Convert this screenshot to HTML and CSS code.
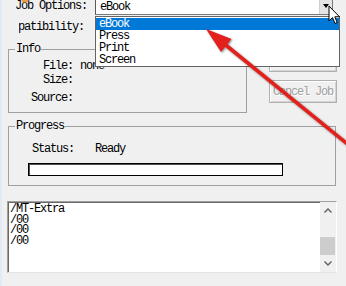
FILE: index.html
```html
<!DOCTYPE html>
<html lang="en">
<head>
    <meta charset="UTF-8">
    <meta name="viewport" content="width=device-width, initial-scale=1.0">
    <title>Distiller</title>
    <link rel="stylesheet" href="styles.css">
</head>
<body>
<div class="win">
    <!-- Job Options combo, list is dropped open -->
    <div class="row first">
        <label class="lbl job">Job Options:</label>
        <div class="combo">
            <span class="combo-text">eBook</span>
            <span class="drop"><i class="tri"></i></span>
            <ul class="list">
                <li class="sel">eBook</li>
                <li>Press</li>
                <li>Print</li>
                <li>Screen</li>
            </ul>
        </div>
    </div>

    <div class="row second">
        <label class="lbl compat"><span>Compatibility:</span></label>
        <div class="combo compat-combo">
            <span class="combo-text">Acrobat 5.0 (PDF 1.4)</span>
            <span class="drop"><i class="tri"></i></span>
        </div>
    </div>

    <div class="middle">
        <fieldset class="group info">
            <legend>Info</legend>
            <div class="info-row r1"><span class="key">File:</span><span class="val">none</span></div>
            <div class="info-row r2"><span class="key">Size:</span><span class="val"></span></div>
            <div class="info-row r3"><span class="key">Source:</span><span class="val"></span></div>
        </fieldset>
        <div class="buttons">
            <button class="btn hidden-btn" disabled>Pause</button>
            <button class="btn cancel" disabled>Cancel Job</button>
        </div>
    </div>

    <fieldset class="group progress">
        <legend>Progress</legend>
        <div class="status"><span class="status-key">Status:</span><span>Ready</span></div>
        <div class="bar"></div>
    </fieldset>

    <div class="log">
        <div class="log-text">
            <div>/MT-Extra</div>
            <div>/00</div>
            <div>/00</div>
            <div>/00</div>
        </div>
        <div class="vscroll">
            <span class="sb-btn">
                <svg width="8" height="5" viewBox="0 0 8 5"><polyline points="0.5,4.5 4,1 7.5,4.5" fill="none" stroke="#606060" stroke-width="1.4"/></svg>
            </span>
            <span class="sb-track"><span class="sb-thumb"></span></span>
            <span class="sb-btn">
                <svg width="8" height="5" viewBox="0 0 8 5"><polyline points="0.5,0.5 4,4 7.5,0.5" fill="none" stroke="#606060" stroke-width="1.4"/></svg>
            </span>
        </div>
    </div>
</div>

<!-- annotation drawn over the screenshot -->
<svg class="overlay" width="346" height="286" viewBox="0 0 346 286">
    <ellipse cx="25" cy="0" rx="3.5" ry="2.5" fill="#f19a3e"/>
    <g class="red-arrow">
        <line x1="372" y1="164" x2="222" y2="42" stroke="#e3201b" stroke-width="3.6"/>
        <polygon points="206,29 231.5,39 221,52" fill="#e3201b"/>
    </g>
</svg>

<svg class="cursor" width="14" height="21" viewBox="0 0 14 21">
    <path d="M1,1 L1,16 L4.5,12.5 L7,18.5 L9.2,17.6 L6.8,11.8 L11.5,11.8 Z" fill="#fff" stroke="#000" stroke-width="1" stroke-linejoin="round"/>
</svg>
</body>
</html>
```

FILE: styles.css
```css
html, body {
    margin: 0;
}
body {
    position: relative;
    width: 346px;
    height: 286px;
    overflow: hidden;
    background: #f0f0f0;
    font-family: "Liberation Mono", "Courier New", monospace;
    font-size: 12px;
    letter-spacing: -1.2px;
    white-space: nowrap;
    color: #000;
}
.win {
    height: 286px;
    box-shadow: inset 2px 0 0 #e2ebf5; /* window frame edge */
}

/* top rows */
.row {
    display: flex;
    align-items: flex-start;
}
.row.first {
    height: 15px;
}
.row.second {
    height: 17px;
    margin-top: 4px;
}
.lbl.job {
    width: 95px;
    flex-shrink: 0;
    padding-left: 15px;
    box-sizing: border-box;
    line-height: 13px;
}
.lbl.compat {
    width: 65px;
    flex-shrink: 0;
    margin-left: 19px;
    overflow: hidden;
    display: flex;
    justify-content: flex-end;
    line-height: 17px;
}
.combo {
    position: relative;
    display: flex;
    width: 238px;
    flex-shrink: 0;
    height: 15px;
    box-sizing: border-box;
    background: #fff;
    border: 1px solid #7a7a7a;
    border-top: none;
    border-left-color: #5a5a5a;
}
.compat-combo {
    margin-left: 11px;
    height: 17px;
    border-top: 1px solid #7a7a7a;
}
.combo-text {
    flex: 1;
    padding-left: 4px;
    line-height: 14px;
    overflow: hidden;
}
.drop {
    width: 13px;
    display: flex;
    align-items: center;
    justify-content: center;
    background: #e5e5e5;
    box-shadow: inset 1px 0 0 #cfcfcf;
}
.tri {
    width: 0;
    height: 0;
    border-left: 3px solid transparent;
    border-right: 3px solid transparent;
    border-top: 4px solid #000;
    margin-top: -3px;
}

/* open drop-down list */
.list {
    position: absolute;
    left: -1px;
    top: 16px;
    z-index: 5;
    width: 245px;
    margin: 0;
    padding: 1px 0 0;
    list-style: none;
    background: #fff;
    border: 1px solid #646464;
    box-sizing: border-box;
}
.list li {
    height: 12px;
    line-height: 12px;
    padding-left: 3px;
}
.list li.sel {
    background: #0078d7;
    color: #fff;
}

/* group boxes */
.group {
    margin: 0;
    padding: 0;
    border: 1px solid #a0a0a0;
    min-width: 0;
    box-sizing: border-box;
}
.group legend {
    margin-left: 6px;
    padding: 0 1px;
    line-height: 12px;
}

.middle {
    display: flex;
    align-items: flex-start;
    margin-top: 7px;
}
.info {
    margin-left: 8px;
    width: 239px;
    flex-shrink: 0;
    padding-bottom: 8px;
}
.info-row {
    display: flex;
    line-height: 12px;
    height: 12px;
}
.info-row.r1 { margin-top: 5px; }
.info-row.r2 { margin-top: 2px; }
.info-row.r3 { margin-top: 6px; }
.key {
    width: 64px;
    text-align: right;
}
.val {
    margin-left: 7px;
}

.buttons {
    display: flex;
    flex-direction: column;
    margin-left: 22px;
}
.btn {
    width: 68px;
    height: 23px;
    padding: 0;
    font: inherit;
    letter-spacing: -1.2px;
    white-space: nowrap;
    background: #f0f0f0;
    border: 1px solid #b0b0b0;
    box-shadow: inset 1px 1px 0 #fff, inset -1px -1px 0 #d4d4d4;
    color: #a0a0a0;
    text-shadow: 1px 1px 0 #fff;
}
.hidden-btn {
    margin-top: 6px;
}
.cancel {
    margin-top: 8px;
}

.progress {
    margin: 7px 0 0 8px;
    width: 328px;
    padding-bottom: 9px;
}
.status {
    display: flex;
    margin: 11px 0 0 23px;
    line-height: 12px;
}
.status-key {
    width: 63px;
}
.bar {
    margin: 8px 0 0 19px;
    width: 255px;
    height: 13px;
    box-sizing: border-box;
    background: #fff;
    border: 1px solid #000;
    box-shadow: inset 1px 1px 0 #505050;
}

/* message log */
.log {
    display: flex;
    margin: 15px 0 0 7px;
    width: 330px;
    height: 72px;
    box-sizing: border-box;
    background: #fff;
    border: 1px solid;
    border-color: #a0a0a0 #fff #e3e3e3 #a0a0a0;
    box-shadow: inset 1px 1px 0 #696969;
}
.log-text {
    flex: 1;
    padding: 2px 0 0 2px;
    line-height: 10.7px;
}
.vscroll {
    width: 16px;
    display: flex;
    flex-direction: column;
    background: #f0f0f0;
}
.sb-btn {
    height: 17px;
    display: flex;
    align-items: center;
    justify-content: center;
}
.sb-track {
    flex: 1;
    display: flex;
    align-items: flex-end;
}
.sb-thumb {
    width: 15px;
    height: 18px;
    background: #cdcdcd;
}

/* overlays */
.overlay {
    position: absolute;
    left: 0;
    top: 0;
    z-index: 10;
    pointer-events: none;
}
.red-arrow {
    filter: drop-shadow(1px 1px 1px rgba(0, 0, 0, 0.45));
}
.cursor {
    position: absolute;
    left: 328px;
    top: 5px;
    z-index: 11;
}
```
